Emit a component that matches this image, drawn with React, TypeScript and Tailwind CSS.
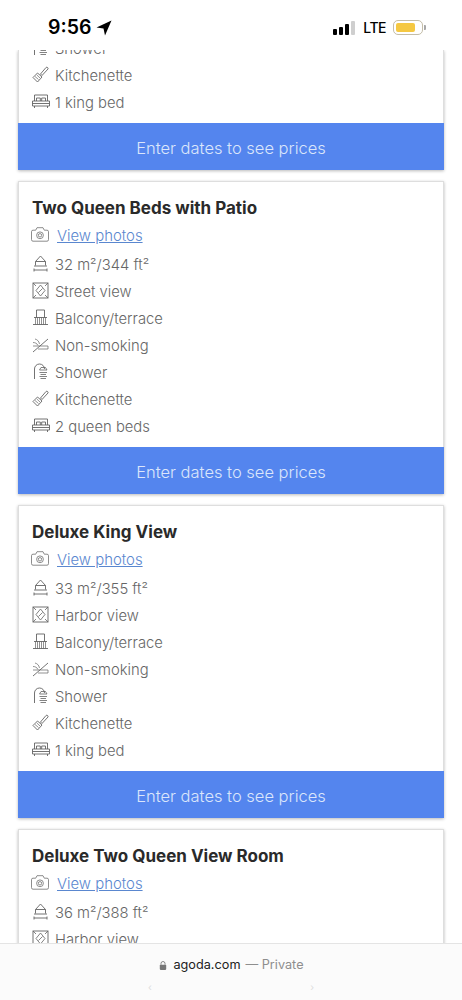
import React from 'react';

const iconClass = 'w-[17px] h-[17px] shrink-0 text-[#636363]';

const Svg = ({ children }: { children: React.ReactNode }) => (
  <svg viewBox="0 0 17 17" fill="none" stroke="currentColor" strokeWidth="0.9" className={iconClass}>
    {children}
  </svg>
);

const CameraIcon = () => (
  <svg viewBox="0 0 18 15" fill="none" stroke="currentColor" strokeWidth="0.8" className="w-[18px] h-[15px] shrink-0 text-[#707070]">
    <path d="M2 3.200h2.700l1.300-2.500h6l1.300 2.500H16a1.500 1.500 0 0 1 1.500 1.500v8a1.500 1.500 0 0 1-1.500 1.500H2a1.500 1.500 0 0 1-1.500-1.500v-8A1.500 1.500 0 0 1 2 3.200z" />
    <circle cx="9" cy="8.300" r="3.400" />
    <circle cx="9" cy="8.300" r="1.700" />
  </svg>
);

const SizeIcon = () => (
  <Svg>
    <path d="M3.500 10.500V6.500L8.500 1l5 5.500v4M2 11h13M3.500 6.500h10" />
    <path d="M2 15h13M2 13.500v3M15 13.500v3" />
  </Svg>
);

const ViewIcon = () => (
  <Svg>
    <rect x="1" y="1" width="15" height="15" />
    <path d="M8.500 3L13 8.500 8.500 14 4 8.500zM1 1l3 3M16 1l-3 3M1 16l3-3M16 16l-3-3" strokeWidth="0.8" />
    <path d="M6.500 10.500l4-4" strokeWidth="0.8" />
  </Svg>
);

const BalconyIcon = () => (
  <Svg>
    <path d="M4.500 8.500V1h8v7.500M2 8.500h13M1 15.500h15" />
    <path d="M3.500 8.500v7M5.500 8.500v7M7.500 8.500v7M9.500 8.500v7M11.500 8.500v7M13.500 8.500v7" strokeWidth="0.7" />
  </Svg>
);

const SmokingIcon = () => (
  <Svg>
    <path d="M1 16L16 3" />
    <path d="M1 10h15v3H6M1 6.500c2 0 4 .8 5 3M3 3c2 .5 4 2 4.500 5" strokeWidth="0.7" />
  </Svg>
);

const ShowerIcon = () => (
  <Svg>
    <path d="M2.500 16V6a5 5 0 0 1 10 0" />
    <path d="M7.500 7h7.500l-1.500-2.500h-4.500zM7.500 9.500h7.500M8.500 11.500h5.500M7.500 13.500h7.500M8.500 15.500h5.500" strokeWidth="0.8" />
  </Svg>
);

const KitchenIcon = () => (
  <Svg>
    <path d="M1 11.500L5.500 7l4.500 4-4.500 5z" />
    <path d="M3 10.500l3.500 3M4.800 9l3.200 3" strokeWidth="0.7" />
    <path d="M8.500 8l5.500-6.500a1.300 1.300 0 0 1 2 1.500l-6 6.500z" />
  </Svg>
);

const BedIcon = () => (
  <svg viewBox="0 0 18 15" fill="none" stroke="currentColor" strokeWidth="0.9" className="w-[18px] h-[15px] shrink-0 text-[#636363]">
    <path d="M2.500 7V1h13v6M.5 7h17v5H.5zM.5 9.500h17M2.500 12v2M15.500 12v2" />
    <path d="M4.500 7V4h3.800v3M9.700 7V4h3.800v3" />
  </svg>
);

type Room = {
  name?: string;
  size: string;
  view: string;
  bed: string;
};

const Row = ({ icon, label }: { icon: React.ReactNode; label: string }) => (
  <div className="flex items-center h-[27px]">
    <div className="w-[23px] flex items-center mb-[2px]">{icon}</div>
    <span className="text-[14.800px] font-light text-[#666666] leading-none pt-[2px]">{label}</span>
  </div>
);

const PriceButton = () => (
  <button className="w-full h-[47px] bg-[#5485ee] text-[16.500px] font-light text-[#dbe6fb] flex items-center justify-center pt-[4px]">
    Enter dates to see prices
  </button>
);

const Card = ({ children }: { children: React.ReactNode }) => (
  <div className="bg-white shadow-[0_1px_3px_rgba(0,0,0,0.28)] shrink-0">{children}</div>
);

const RoomHead = ({ name }: { name: string }) => (
  <>
    <h2 className="h-[28px] flex items-center text-[17px] font-bold text-[#2a2a2a]">{name}</h2>
    <div className="h-[28px] pb-[2px] flex items-center">
      <div className="w-[26px] -ml-[1px] mb-[4px] flex items-center"><CameraIcon /></div>
      <a className="text-[14.900px] font-light text-[#5a87cf] underline">View photos</a>
    </div>
  </>
);

const RoomCard = ({ room }: { room: Room }) => (
  <Card>
    <div className="border-x border-t border-[#dedede] pl-[13px] pt-[13px] pb-[7px]">
      <RoomHead name={room.name ?? ''} />
      <Row icon={<SizeIcon />} label={room.size} />
      <Row icon={<ViewIcon />} label={room.view} />
      <Row icon={<BalconyIcon />} label="Balcony/terrace" />
      <Row icon={<SmokingIcon />} label="Non-smoking" />
      <Row icon={<ShowerIcon />} label="Shower" />
      <Row icon={<KitchenIcon />} label="Kitchenette" />
      <Row icon={<BedIcon />} label={room.bed} />
    </div>
    <PriceButton />
  </Card>
);

export default function App() {
  return (
    <div className="w-[462px] h-[1000px] flex flex-col overflow-hidden bg-white font-['Inter',sans-serif]">
      <div className="h-[50px] shrink-0 flex items-center justify-between pl-[48px] pr-[36px] bg-white">
        <div className="flex items-center gap-[5px] pt-[5px]">
          <span className="text-[19.500px] font-semibold text-black leading-none">9:56</span>
          <svg viewBox="0 0 16 16" className="w-[16px] h-[16px]">
            <path d="M15.500 0.500L0.500 7.500l7 1 1.500 7z" fill="#000" />
          </svg>
        </div>
        <div className="flex items-center pt-[5px]">
          <div className="flex items-end gap-[2px] h-[14px]">
            <div className="w-[4px] h-[6px] rounded-[1px] bg-black" />
            <div className="w-[4px] h-[8px] rounded-[1px] bg-black" />
            <div className="w-[4px] h-[11px] rounded-[1px] bg-black" />
            <div className="w-[4px] h-[14px] rounded-[1px] bg-[#cfcfcf]" />
          </div>
          <span className="ml-[8px] text-[14px] tracking-[-0.5px] font-medium text-black leading-none">LTE</span>
          <div className="ml-[7px] w-[30px] h-[15px] rounded-[5px] border border-[#c4bda8] p-[2px] flex">
            <div className="w-[19px] h-full rounded-[2px] bg-[#f5c842]" />
          </div>
          <div className="ml-[1px] w-[2px] h-[5px] rounded-r-[1px] bg-[#a8a8a8]" />
        </div>
      </div>

      <div className="flex-1 min-h-0 overflow-hidden bg-white">
        <div className="mx-[18px] flex flex-col gap-[11px]">
          <Card>
            <div className="border-x border-[#dedede] pl-[13px] pb-[7px] -mt-[15px]">
              <Row icon={<ShowerIcon />} label="Shower" />
              <Row icon={<KitchenIcon />} label="Kitchenette" />
              <Row icon={<BedIcon />} label="1 king bed" />
            </div>
            <PriceButton />
          </Card>
          <RoomCard room={{ name: 'Two Queen Beds with Patio', size: '32 m²/344 ft²', view: 'Street view', bed: '2 queen beds' }} />
          <RoomCard room={{ name: 'Deluxe King View', size: '33 m²/355 ft²', view: 'Harbor view', bed: '1 king bed' }} />
          <Card>
            <div className="border-x border-t border-[#dedede] pl-[13px] pt-[13px] pb-[7px]">
              <RoomHead name="Deluxe Two Queen View Room" />
              <Row icon={<SizeIcon />} label="36 m²/388 ft²" />
              <Row icon={<ViewIcon />} label="Harbor view" />
            </div>
          </Card>
        </div>
      </div>

      <div className="h-[57px] shrink-0 bg-[#fbfbfb] border-t border-[#e4e4e4] flex flex-col items-center">
        <div className="flex items-center h-[42px] text-[12.700px] pl-[1px]">
          <svg viewBox="0 0 10 12" className="w-[8px] h-[11px] mr-[6px]">
            <path d="M2.500 5V3.500a2.500 2.500 0 0 1 5 0V5" fill="none" stroke="#777" strokeWidth="1.100" />
            <rect x="1" y="5" width="8" height="6.500" rx="1" fill="#777" />
          </svg>
          <span className="text-[#222222]">agoda.com</span>
          <span className="ml-[5px] text-[#8e8e8e]">— Private</span>
        </div>
        <div className="w-[166px] -mt-[4px] flex justify-between text-[#dddddd] text-[10px] leading-none">
          <span>‹</span>
          <span>›</span>
        </div>
      </div>
    </div>
  );
}
